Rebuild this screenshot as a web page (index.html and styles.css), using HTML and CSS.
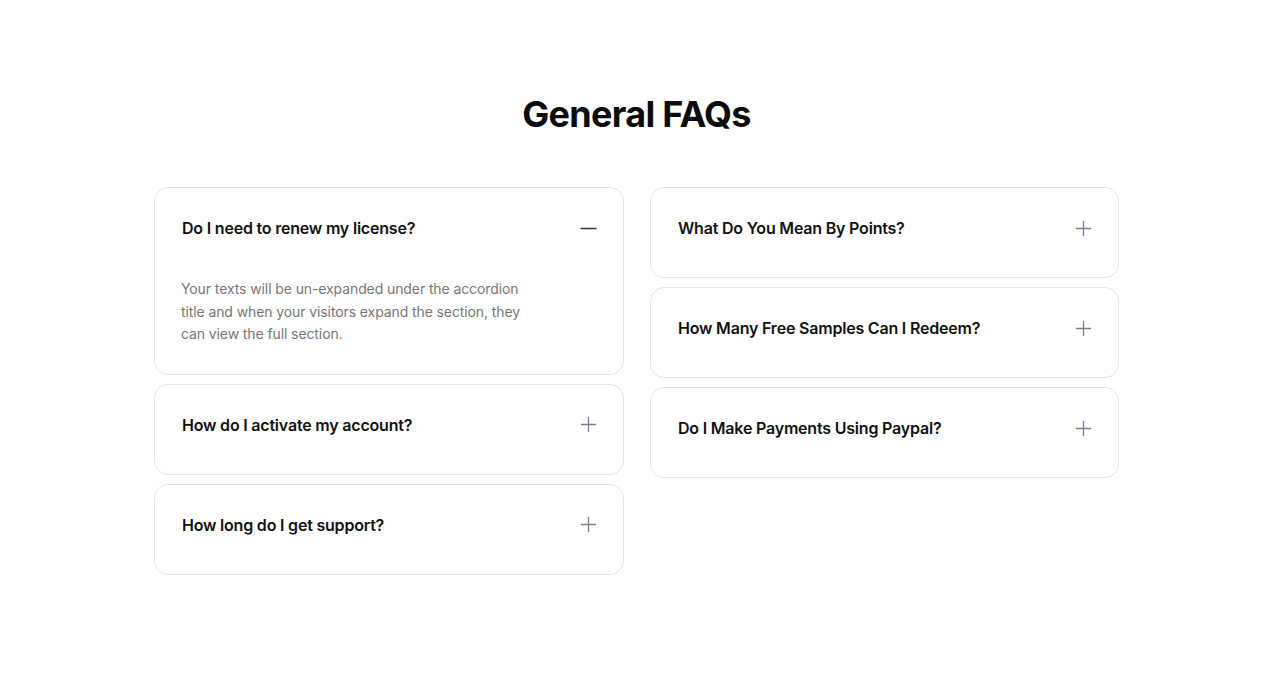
FILE: index.html
```html
<!DOCTYPE html>
<html lang="en">
<head>
<meta charset="utf-8">
<title>General FAQs</title>
<link rel="stylesheet" href="styles.css">
</head>
<body>
<section class="faq">
  <h1 class="faq-title">General FAQs</h1>
  <div class="faq-grid">
    <div class="faq-col">
      <div class="item open">
        <div class="item-head">
          <span class="q">Do I need to renew my license?</span>
          <svg class="icon minus" width="17" height="17" viewBox="0 0 17 17"><path d="M0.5 8.5h16" stroke="currentColor" stroke-width="1.5"/></svg>
        </div>
        <p class="answer">Your texts will be un-expanded under the accordion title and when your visitors expand the section, they can view the full section.</p>
      </div>
      <div class="item">
        <div class="item-head">
          <span class="q">How do I activate my account?</span>
          <svg class="icon plus" width="17" height="17" viewBox="0 0 17 17"><path d="M1 8.5h15M8.5 1v15" stroke="currentColor" stroke-width="1.3"/></svg>
        </div>
      </div>
      <div class="item">
        <div class="item-head">
          <span class="q">How long do I get support?</span>
          <svg class="icon plus" width="17" height="17" viewBox="0 0 17 17"><path d="M1 8.5h15M8.5 1v15" stroke="currentColor" stroke-width="1.3"/></svg>
        </div>
      </div>
    </div>
    <div class="faq-col">
      <div class="item">
        <div class="item-head">
          <span class="q">What Do You Mean By Points?</span>
          <svg class="icon plus" width="17" height="17" viewBox="0 0 17 17"><path d="M1 8.5h15M8.5 1v15" stroke="currentColor" stroke-width="1.3"/></svg>
        </div>
      </div>
      <div class="item">
        <div class="item-head">
          <span class="q">How Many Free Samples Can I Redeem?</span>
          <svg class="icon plus" width="17" height="17" viewBox="0 0 17 17"><path d="M1 8.5h15M8.5 1v15" stroke="currentColor" stroke-width="1.3"/></svg>
        </div>
      </div>
      <div class="item">
        <div class="item-head">
          <span class="q">Do I Make Payments Using Paypal?</span>
          <svg class="icon plus" width="17" height="17" viewBox="0 0 17 17"><path d="M1 8.5h15M8.5 1v15" stroke="currentColor" stroke-width="1.3"/></svg>
        </div>
      </div>
    </div>
  </div>
</section>
</body>
</html>
```
FILE: styles.css
```css
html, body {
  margin: 0;
  padding: 0;
  background: #ffffff;
}
body {
  font-family: Inter, "Noto Sans", Arial, sans-serif;
  color: #111111;
}
.faq {
  width: 965px;
  margin: 0 auto;
  padding: 93px 7px 0 0;
}
.faq-title {
  margin: 0 0 52px;
  text-align: center;
  font-size: 36px;
  line-height: 42px;
  font-weight: 700;
  letter-spacing: -0.7px;
  color: #0b0b0b;
}
.faq-grid {
  display: grid;
  grid-template-columns: 470px 469px;
  column-gap: 26px;
  align-items: start;
}
.faq-col {
  display: flex;
  flex-direction: column;
  gap: 9px;
}
.item {
  border: 1px solid #e4e4e4;
  border-radius: 14px;
  padding: 29px 26px 38px 27px;
}
.item.open {
  padding-bottom: 28px;
}
.item-head {
  display: flex;
  align-items: center;
  justify-content: space-between;
  height: 22px;
}
.q {
  font-size: 16px;
  line-height: 22px;
  font-weight: 600;
  color: #111111;
  letter-spacing: -0.2px;
}
.icon {
  flex: none;
  display: block;
}
.icon.minus {
  color: #333333;
}
.icon.plus {
  color: #7b7b95;
}
.answer {
  margin: 39px 0 0 -1px;
  max-width: 345px;
  font-size: 14px;
  line-height: 22.5px;
  color: #777777;
  letter-spacing: -0.1px;
}
```
